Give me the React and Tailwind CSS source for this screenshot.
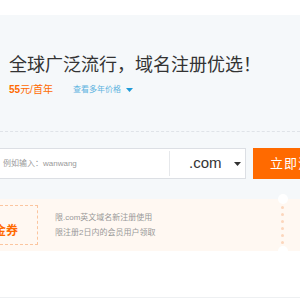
export default function App() {
  return (
    <div className="w-[300px] h-[300px] overflow-hidden bg-white font-['Liberation_Sans','Noto_Sans_CJK_SC',sans-serif]">
      <div className="h-[15px] bg-white" />

      {/* search section */}
      <div className="bg-[#f5f8fa] pt-[38px] pb-[20px]">
        <h1 className="pl-[9px] text-[18px] leading-[24px] text-[#333] whitespace-nowrap">
          全球广泛流行，域名注册优选！
        </h1>
        <div className="mt-[7px] pl-[9px] flex items-center h-[12px] text-[10px] leading-[12px] whitespace-nowrap">
          <span className="text-[#ff6a00]">
            <span className="font-bold">55</span>元/首年
          </span>
          <span className="ml-[20px] text-[8px] text-[#5fb4e0] flex items-center">
            查看多年价格
            <svg width="7" height="4" viewBox="0 0 7 4" className="ml-[5px]">
              <path d="M0 0h7L3.5 4z" fill="#1f9bd8" />
            </svg>
          </span>
        </div>

        <div className="mt-[35px] border-t border-dashed border-[#dfe3e8]" />

        <div className="mt-[16px] flex h-[31px] whitespace-nowrap">
          <div className="-ml-[10px] w-[256px] shrink-0 flex bg-white border border-[#dcdfe4]">
            <div className="flex-1 flex items-center pl-[12px] text-[8px] text-[#999]">
              例如输入：wanwang
            </div>
            <div className="my-[2px] w-px bg-[#e6e8eb]" />
            <div className="w-[75px] flex items-center pl-[19px] text-[15px] text-[#333]">
              .com
              <svg width="7" height="4" viewBox="0 0 7 4" className="ml-[12px]">
                <path d="M0 0h7L3.5 4z" fill="#333" />
              </svg>
            </div>
          </div>
          <button className="ml-[7px] shrink-0 bg-[#ff6a00] text-white text-[13px] tracking-[1px] pl-[17px] pr-[20px] h-[31px]">
            立即注册
          </button>
        </div>
      </div>

      {/* coupon */}
      <div className="relative h-[52px] bg-[#fff8f2] flex items-center whitespace-nowrap">
        <div className="-ml-[30px] w-[68px] h-[40px] shrink-0 border border-dashed border-[#fbc59f] flex items-end justify-end pb-[7px] pr-[19px]">
          <span className="text-[12px] leading-[12px] font-bold text-[#ff6a00]">代金券</span>
        </div>
        <div className="ml-[17px] text-[8px] leading-[15px] text-[#999]">
          <div>限.com英文域名新注册使用</div>
          <div>限注册2日内的会员用户领取</div>
        </div>
        <div className="ml-auto mr-[16px] flex flex-col gap-[4px]">
          <span className="w-[3px] h-[3px] rounded-full bg-[#fcd6bc]" />
          <span className="w-[3px] h-[3px] rounded-full bg-[#fcd6bc]" />
          <span className="w-[3px] h-[3px] rounded-full bg-[#fcd6bc]" />
          <span className="w-[3px] h-[3px] rounded-full bg-[#fcd6bc]" />
          <span className="w-[3px] h-[3px] rounded-full bg-[#fcd6bc]" />
          <span className="w-[3px] h-[3px] rounded-full bg-[#fcd6bc]" />
        </div>
        <span className="absolute right-[12px] -top-[5px] w-[10px] h-[10px] rounded-full bg-white" />
        <span className="absolute right-[12px] -bottom-[5px] w-[10px] h-[10px] rounded-full bg-white" />
      </div>

      <div className="h-[47px] border-b border-[#eef0f2]" />
    </div>
  );
}
